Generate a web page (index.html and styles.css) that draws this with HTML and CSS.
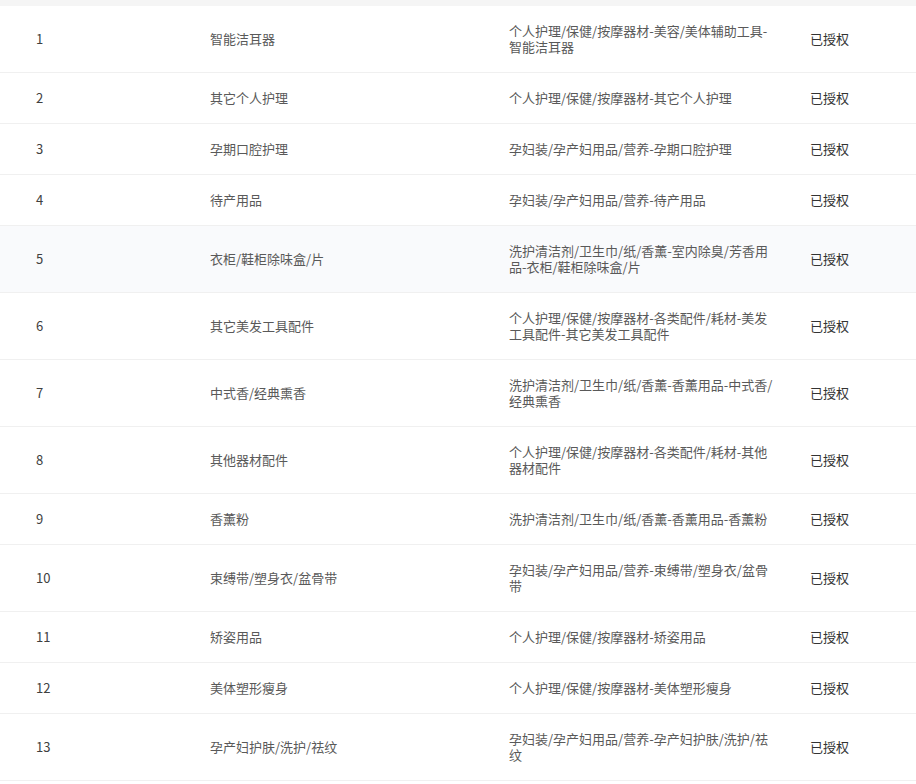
FILE: index.html
```html
<!DOCTYPE html>
<html lang="zh-CN">
<head>
<meta charset="utf-8">
<title>授权类目</title>
<link rel="stylesheet" href="styles.css">
</head>
<body>
<div class="table">
  <div class="strip"></div>
  <div class="row"><div class="c c1">1</div><div class="c c2">智能洁耳器</div><div class="c c3">个人护理/保健/按摩器材-美容/美体辅助工具-智能洁耳器</div><div class="c c4">已授权</div></div>
  <div class="row"><div class="c c1">2</div><div class="c c2">其它个人护理</div><div class="c c3">个人护理/保健/按摩器材-其它个人护理</div><div class="c c4">已授权</div></div>
  <div class="row"><div class="c c1">3</div><div class="c c2">孕期口腔护理</div><div class="c c3">孕妇装/孕产妇用品/营养-孕期口腔护理</div><div class="c c4">已授权</div></div>
  <div class="row"><div class="c c1">4</div><div class="c c2">待产用品</div><div class="c c3">孕妇装/孕产妇用品/营养-待产用品</div><div class="c c4">已授权</div></div>
  <div class="row hover"><div class="c c1">5</div><div class="c c2">衣柜/鞋柜除味盒/片</div><div class="c c3">洗护清洁剂/卫生巾/纸/香薰-室内除臭/芳香用品-衣柜/鞋柜除味盒/片</div><div class="c c4">已授权</div></div>
  <div class="row"><div class="c c1">6</div><div class="c c2">其它美发工具配件</div><div class="c c3">个人护理/保健/按摩器材-各类配件/耗材-美发工具配件-其它美发工具配件</div><div class="c c4">已授权</div></div>
  <div class="row"><div class="c c1">7</div><div class="c c2">中式香/经典熏香</div><div class="c c3">洗护清洁剂/卫生巾/纸/香薰-香薰用品-中式香/经典熏香</div><div class="c c4">已授权</div></div>
  <div class="row"><div class="c c1">8</div><div class="c c2">其他器材配件</div><div class="c c3">个人护理/保健/按摩器材-各类配件/耗材-其他器材配件</div><div class="c c4">已授权</div></div>
  <div class="row"><div class="c c1">9</div><div class="c c2">香薰粉</div><div class="c c3">洗护清洁剂/卫生巾/纸/香薰-香薰用品-香薰粉</div><div class="c c4">已授权</div></div>
  <div class="row"><div class="c c1">10</div><div class="c c2">束缚带/塑身衣/盆骨带</div><div class="c c3">孕妇装/孕产妇用品/营养-束缚带/塑身衣/盆骨带</div><div class="c c4">已授权</div></div>
  <div class="row"><div class="c c1">11</div><div class="c c2">矫姿用品</div><div class="c c3">个人护理/保健/按摩器材-矫姿用品</div><div class="c c4">已授权</div></div>
  <div class="row"><div class="c c1">12</div><div class="c c2">美体塑形瘦身</div><div class="c c3">个人护理/保健/按摩器材-美体塑形瘦身</div><div class="c c4">已授权</div></div>
  <div class="row"><div class="c c1">13</div><div class="c c2">孕产妇护肤/洗护/祛纹</div><div class="c c3">孕妇装/孕产妇用品/营养-孕产妇护肤/洗护/祛纹</div><div class="c c4">已授权</div></div>
</div>
</body>
</html>
```
FILE: styles.css
```css
html, body {
  margin: 0;
  padding: 0;
  background: #ffffff;
}
body {
  font-family: "Noto Sans CJK SC", "Noto Sans", sans-serif;
  font-size: 13px;
  line-height: 16px;
  color: #595959;
}
.table {
  width: 916px;
}
.strip {
  height: 6px;
  background: #f5f5f5;
}
.row {
  display: grid;
  grid-template-columns: 194px 299px 301px 1fr;
  align-items: center;
  border-bottom: 1px solid #f0f0f0;
}
.row.hover {
  background: #f9fafc;
}
.c {
  padding: 17px 16px;
}
.c1 {
  padding-left: 36px;
  color: #404040;
}
.c3 {
  padding-right: 19px;
}
.c4 {
  color: #333333;
}
```
